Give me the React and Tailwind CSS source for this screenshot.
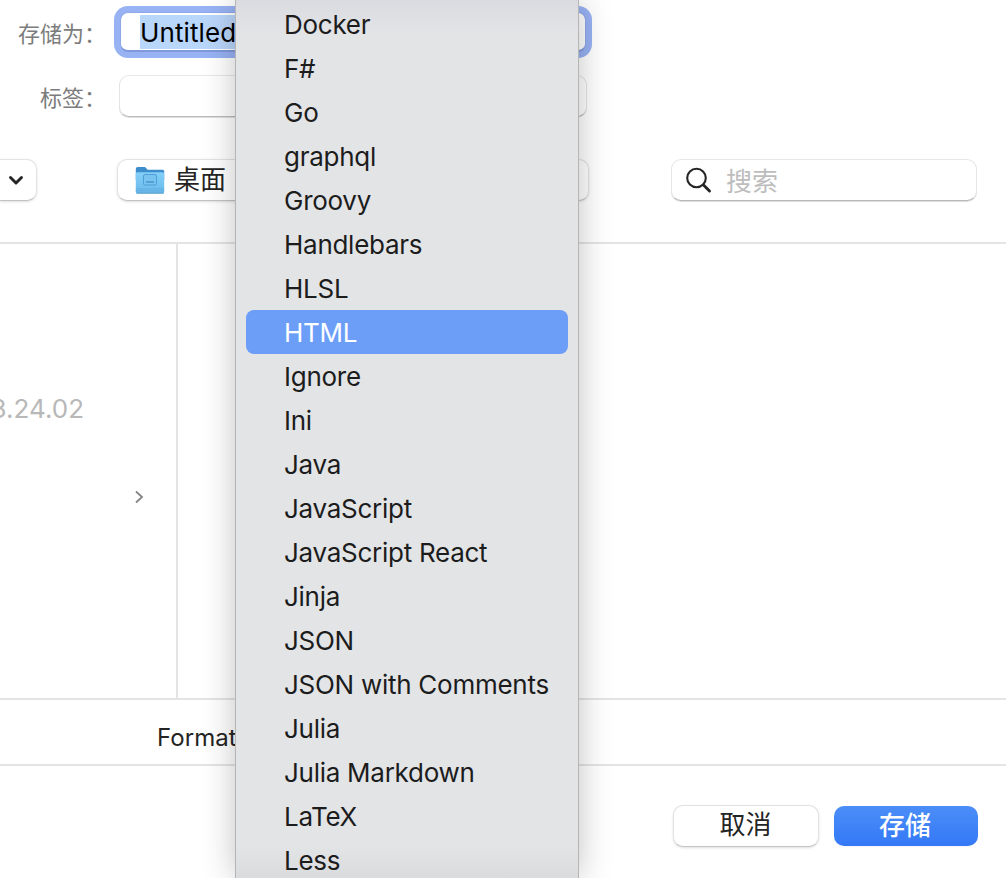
import React from "react";

const languages = [
  "Docker", "F#", "Go", "graphql", "Groovy", "Handlebars", "HLSL", "HTML",
  "Ignore", "Ini", "Java", "JavaScript", "JavaScript React", "Jinja", "JSON",
  "JSON with Comments", "Julia", "Julia Markdown", "LaTeX", "Less",
];

function FolderIcon() {
  return (
    <svg className="h-[30px] w-[30px] shrink-0" viewBox="0 0 30 30">
      <defs>
        <linearGradient id="folderFront" x1="0" y1="0" x2="0" y2="1">
          <stop offset="0" stopColor="#83cff9" />
          <stop offset="1" stopColor="#69b9ea" />
        </linearGradient>
      </defs>
      <path d="M.8 4Q.8 2 2.800 2h6.500q1 0 1.800.9l1.500 1.900H27.700q1.500 0 1.500 1.500V15H.8z" fill="#3d8ccb" />
      <path d="M.8 8.800Q.8 7.300 2.300 7.300h25.400q1.500 0 1.500 1.500V27Q29.200 28.500 27.700 28.500h-25.400Q.8 28.500.8 27z" fill="url(#folderFront)" />
      <path d="M.8 23.800h28.400M.8 25.800h28.400" stroke="#5aaadc" strokeWidth=".7" />
      <path d="M1.500 28.200h27" stroke="#4695c6" strokeWidth=".8" />
      <rect x="8.500" y="9.500" width="13" height="10.500" rx="1.500" fill="#78c3f0" stroke="#4b9fd6" />
      <path d="M11 17h8" stroke="#3d8fc9" strokeWidth="1.300" />
    </svg>
  );
}

function Header() {
  return (
    <header className="flex h-[242px] shrink-0 flex-col">
      <div className="flex h-[65px] items-start pt-[12px]">
        <label className="w-[114px] pl-[18px] pt-[4px] text-[22px] leading-[36px] text-[#7c7c7c]">存储为：</label>
        <div className="ml-[6px] flex h-[40px] w-[466px] items-center rounded-[8px] border border-b-2 border-[#8ea8ea] border-b-[#7f99dc] bg-white pl-[19px] ring-6 ring-[#98b2f4]">
          <span className="mt-[1px] h-[34px] w-[110px] whitespace-nowrap bg-[#b9d6fb] text-[26px] leading-[35px] tracking-[0.1px] text-black">Untitled</span>
        </div>
      </div>
      <div className="flex h-[94px] items-start pt-[10px]">
        <label className="w-[119px] pl-[40px] pt-[5px] text-[22px] leading-[36px] text-[#7c7c7c]">标签：</label>
        <div className="h-[42px] w-[468px] rounded-[10px] border border-x-[#e4e4e4] border-b-[#bcbcbc] border-t-[#e7e7e7] bg-white shadow-[0_1px_0_#dedede]" />
      </div>
      <div className="flex items-start">
        <button className="flex h-[42px] w-[37px] items-center justify-end rounded-r-[10px] border border-l-0 border-[#e3e3e3] border-b-[#c3c3c3] bg-white pr-[12px] shadow-sm">
          <svg className="h-[11px] w-[16px]" viewBox="0 0 16 11" fill="none" stroke="#242424" strokeWidth="2.900" strokeLinecap="round" strokeLinejoin="round">
            <path d="M2.500 2.500 8 8l5.500-5.500" />
          </svg>
        </button>
        <button className="ml-[80px] flex h-[42px] w-[472px] items-center rounded-[10px] border border-[#e3e3e3] border-b-[#c3c3c3] bg-white pl-[17px] text-[26px] text-[#242424] shadow-sm">
          <FolderIcon />
          <span className="-mt-[1px] ml-[9px] leading-[38px]">桌面</span>
        </button>
        <div className="ml-[82px] flex h-[42px] w-[306px] items-center rounded-[10px] border border-[#e7e7e7] border-b-[#b9b9b9] bg-white pl-[13px] shadow-[0_1px_0_#dedede]">
          <svg className="h-[28px] w-[28px]" viewBox="0 0 28 28" fill="none" stroke="#242424" strokeLinecap="round">
            <circle cx="11.500" cy="12" r="9.300" strokeWidth="2.100" />
            <path d="m18.500 19 6 6" strokeWidth="2.900" />
          </svg>
          <span className="ml-[13px] mt-[3px] text-[26px] leading-[38px] text-[#bdbdbd]">搜索</span>
        </div>
      </div>
    </header>
  );
}

function LanguageMenu() {
  return (
    <ul className="absolute left-[236px] top-0 h-[878px] w-[342px] bg-[linear-gradient(to_bottom,#d9dbe0_0,#e3e4e6_34px,#e3e4e6_846px,#dadbdd_878px)] px-[10px] pt-[2px] shadow-[0_0_0_1px_#b5b5b6,0_0_32px_0_rgba(0,0,0,0.26)]">
      {languages.map((name) => (
        <li
          key={name}
          className={
            name === "HTML"
              ? "h-[44px] whitespace-nowrap rounded-[8px] bg-[#6c9ef8] pl-[38px] text-[26px] leading-[46px] tracking-[-0.27px] text-white"
              : "h-[44px] whitespace-nowrap pl-[38px] text-[26px] leading-[46px] tracking-[-0.27px] text-[#1c1c1d]"
          }
        >
          {name}
        </li>
      ))}
    </ul>
  );
}

export default function App() {
  return (
    <div className="relative flex h-[878px] w-[1006px] flex-col overflow-hidden bg-white font-['Inter','Noto_Sans_CJK_SC',sans-serif]">
      <Header />
      <main className="flex h-[458px] shrink-0 border-y-2 border-[#e4e4e4]">
        <div className="flex w-[178px] flex-col overflow-hidden border-r-2 border-[#e4e4e4]">
          <div className="mt-[142px] flex h-[44px] w-[84px] items-center justify-end whitespace-nowrap text-[26px] text-[#b8b8b8]">3.24.02</div>
          <div className="mt-[45px] flex h-[44px] items-center pl-[134px]">
            <svg className="h-[14px] w-[10px]" viewBox="0 0 10 14" fill="none" stroke="#858585" strokeWidth="1.800">
              <path d="m2 1.500 6 5.500-6 5.500" />
            </svg>
          </div>
        </div>
        <div className="grow" />
      </main>
      <div className="flex h-[66px] shrink-0 items-center border-b-2 border-[#e4e4e4] pl-[157px] pt-[12px] text-[24px] leading-[34px] tracking-[0.05px] text-[#242424]">
        <span>Format:</span>
      </div>
      <footer className="flex grow items-start justify-end gap-[15px] pr-[28px] pt-[39px]">
        <button className="h-[42px] w-[146px] rounded-[10px] border border-[#e2e2e2] border-b-[#c5c5c5] bg-white pb-[2px] pr-[1px] text-[26px] leading-[38px] text-[#242424] shadow-sm">取消</button>
        <button className="mt-[1px] h-[40px] w-[144px] rounded-[10px] bg-linear-to-b from-[#4b8ef8] to-[#3478f6] pr-[2px] text-[26px] font-medium leading-[38px] text-white shadow-xs">存储</button>
      </footer>
      <LanguageMenu />
    </div>
  );
}
